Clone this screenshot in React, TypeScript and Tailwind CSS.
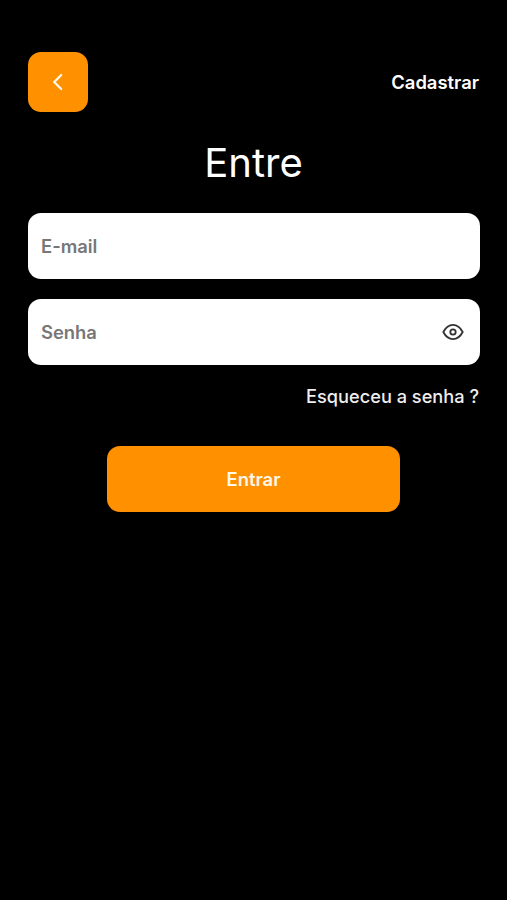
import React, { useState } from 'react';

const EyeIcon = () => (
  <svg width="22" height="18" viewBox="0 0 22 18" fill="none" className="stroke-[#333333]">
    <path
      d="M1.3 9C3.7 4.4 7 1.9 11 1.9S18.3 4.4 20.7 9C18.3 13.6 15 16.1 11 16.1S3.7 13.6 1.3 9Z"
      strokeWidth="1.8"
      strokeLinejoin="round"
    />
    <circle cx="11" cy="9" r="2.7" strokeWidth="1.8" />
  </svg>
);

const App: React.FC = () => {
  const [email, setEmail] = useState('');
  const [password, setPassword] = useState('');
  const [showPassword, setShowPassword] = useState(false);

  const inputClass =
    'w-full min-w-0 bg-transparent pt-0.5 text-[18.4px] font-semibold text-black placeholder:text-[#777777] focus:outline-none';

  return (
    <div className="flex min-h-screen flex-col bg-black pt-13 pr-[27px] pl-7 font-['Inter',sans-serif] text-white">
      <header className="flex items-center justify-between pr-px">
        <button
          type="button"
          aria-label="Voltar"
          className="flex size-15 items-center justify-center rounded-[13px] bg-[#ff9100]"
        >
          <svg width="20" height="20" viewBox="0 0 20 20" fill="none" className="stroke-[#fff8ec]">
            <path d="M13.2 3 6.2 10l7 7" strokeWidth="2.3" strokeLinecap="round" strokeLinejoin="round" />
          </svg>
        </button>
        <a href="#" className="pt-0.5 text-[18.4px] font-semibold">Cadastrar</a>
      </header>

      <h1 className="mt-[27px] pr-px text-center text-[40px] leading-12">Entre</h1>

      <form className="mt-[26px] flex flex-col" onSubmit={(e) => e.preventDefault()}>
        <div className="flex h-[66px] items-center rounded-[13px] bg-white px-[13px]">
          <input
            type="email"
            placeholder="E-mail"
            value={email}
            onChange={(e) => setEmail(e.target.value)}
            className={inputClass}
          />
        </div>

        <div className="mt-5 flex h-[66px] items-center rounded-[13px] bg-white pr-4 pl-[13px]">
          <input
            type={showPassword ? 'text' : 'password'}
            placeholder="Senha"
            value={password}
            onChange={(e) => setPassword(e.target.value)}
            className={inputClass}
          />
          <button type="button" aria-label="Mostrar senha" onClick={() => setShowPassword(!showPassword)}>
            <EyeIcon />
          </button>
        </div>

        <a href="#" className="mt-4 mr-px self-end text-[18.2px] leading-[30px] font-medium text-[#eeeeee]">
          Esqueceu a senha ?
        </a>

        <button
          type="submit"
          className="mt-[35px] mr-px h-[66px] w-[293px] self-center rounded-[13px] bg-[#ff9100] pt-0.5 text-[18.4px] font-semibold text-[#fff8ec]"
        >
          Entrar
        </button>
      </form>
    </div>
  );
};

export default App;
